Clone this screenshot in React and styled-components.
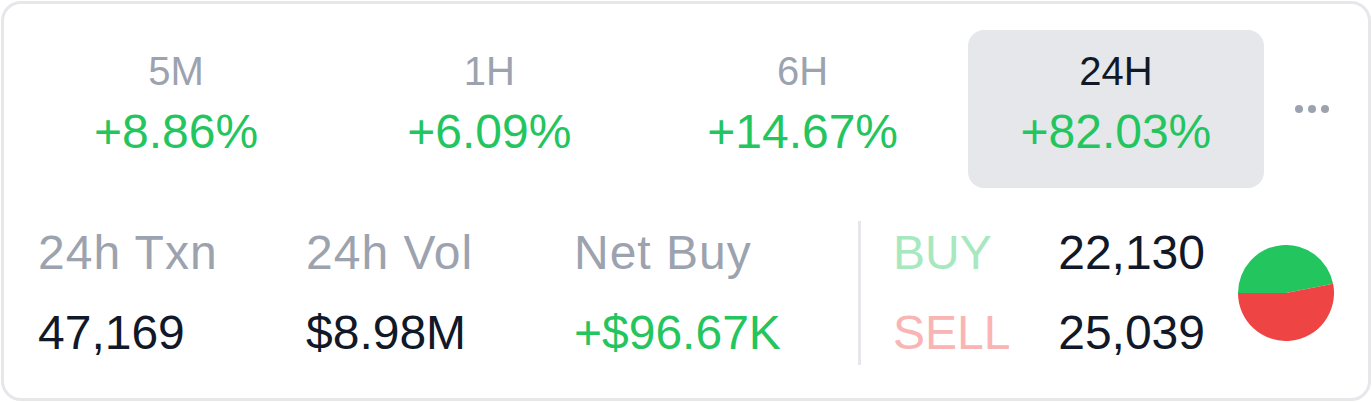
import styled, { createGlobalStyle } from "styled-components";

const GlobalStyle = createGlobalStyle`
  html, body {
    margin: 0;
    padding: 0;
    background: #ffffff;
  }
  body {
    font-family: "Liberation Sans", Arial, sans-serif;
  }
`;

const Card = styled.div`
  box-sizing: border-box;
  width: 1370px;
  height: 400px;
  margin: 1px;
  border: 3px solid #e5e7eb;
  border-radius: 20px;
  background: #fff;
  display: flex;
  flex-direction: column;
`;

const TabRow = styled.div`
  display: flex;
  align-items: center;
  gap: 17px;
  padding: 26px 25px 0 24px;
`;

const Tab = styled.div`
  flex: 1;
  height: 158px;
  box-sizing: border-box;
  padding-top: 17px;
  border-radius: 16px;
  background: ${(p) => (p.$active ? "#e5e7eb" : "transparent")};
  display: flex;
  flex-direction: column;
  align-items: center;
  gap: 8px;
`;

const TabLabel = styled.div`
  font-size: 40px;
  line-height: 48px;
  color: ${(p) => (p.$active ? "#111827" : "#9ca3af")};
`;

const Change = styled.div`
  font-size: 48px;
  line-height: 58px;
  color: #22c55e;
`;

const More = styled.button`
  width: 62px;
  height: 40px;
  border: 0;
  padding: 0;
  background: transparent;
  display: flex;
  align-items: center;
  justify-content: center;
  gap: 4.5px;
`;

const Dot = styled.span`
  width: 8.5px;
  height: 8.5px;
  border-radius: 50%;
  background: #9ca3af;
`;

const StatsRow = styled.div`
  display: flex;
  align-items: center;
  padding: 33px 32px 0 34px;
`;

const Stats = styled.div`
  display: grid;
  grid-template-columns: 268px 268px 266px;
`;

const Stat = styled.div`
  display: flex;
  flex-direction: column;
  gap: 22px;
`;

const StatLabel = styled.div`
  font-size: 48px;
  line-height: 58px;
  letter-spacing: 1px;
  color: #9ca3af;
`;

const StatValue = styled.div`
  font-size: 48px;
  line-height: 58px;
  color: ${(p) => p.$color || "#111827"};
`;

const Divider = styled.div`
  width: 3px;
  height: 144px;
  background: #e5e7eb;
  margin: 0 32px 0 18px;
`;

const Sides = styled.div`
  width: 312px;
  display: grid;
  grid-template-columns: auto 1fr;
  row-gap: 22px;
`;

const SideLabel = styled.div`
  font-size: 48px;
  line-height: 58px;
  color: ${(p) => p.$color};
`;

const SideValue = styled.div`
  font-size: 48px;
  line-height: 58px;
  color: #111827;
  text-align: right;
`;

const Pie = styled.svg`
  width: 96px;
  height: 96px;
  margin-left: 33px;
`;

const tabs = [
  { label: "5M", change: "+8.86%" },
  { label: "1H", change: "+6.09%" },
  { label: "6H", change: "+14.67%" },
  { label: "24H", change: "+82.03%", active: true },
];

const buys = 22130;
const sells = 25039;

const piePaths = () => {
  const share = buys / (buys + sells);
  const a = Math.PI - share * 2 * Math.PI;
  const x = 50 + 50 * Math.cos(a);
  const y = 50 - 50 * Math.sin(a);
  const large = share > 0.5 ? 1 : 0;
  return {
    buy: `M50,50 L0,50 A50,50 0 ${large} 1 ${x},${y} Z`,
    sell: `M50,50 L${x},${y} A50,50 0 ${1 - large} 1 0,50 Z`,
  };
};

const App = () => {
  const pie = piePaths();
  return (
    <>
      <GlobalStyle />
      <Card>
        <TabRow>
          {tabs.map((t) => (
            <Tab key={t.label} $active={t.active}>
              <TabLabel $active={t.active}>{t.label}</TabLabel>
              <Change>{t.change}</Change>
            </Tab>
          ))}
          <More aria-label="more">
            <Dot />
            <Dot />
            <Dot />
          </More>
        </TabRow>
        <StatsRow>
          <Stats>
            <Stat>
              <StatLabel>24h Txn</StatLabel>
              <StatValue>47,169</StatValue>
            </Stat>
            <Stat>
              <StatLabel>24h Vol</StatLabel>
              <StatValue>$8.98M</StatValue>
            </Stat>
            <Stat>
              <StatLabel>Net Buy</StatLabel>
              <StatValue $color="#22c55e">+$96.67K</StatValue>
            </Stat>
          </Stats>
          <Divider />
          <Sides>
            <SideLabel $color="#a7e8bf">BUY</SideLabel>
            <SideValue>{buys.toLocaleString("en-US")}</SideValue>
            <SideLabel $color="#f9b4b4">SELL</SideLabel>
            <SideValue>{sells.toLocaleString("en-US")}</SideValue>
          </Sides>
          <Pie viewBox="0 0 100 100">
            <path d={pie.buy} fill="#22c55e" />
            <path d={pie.sell} fill="#ef4444" />
          </Pie>
        </StatsRow>
      </Card>
    </>
  );
};

export default App;
